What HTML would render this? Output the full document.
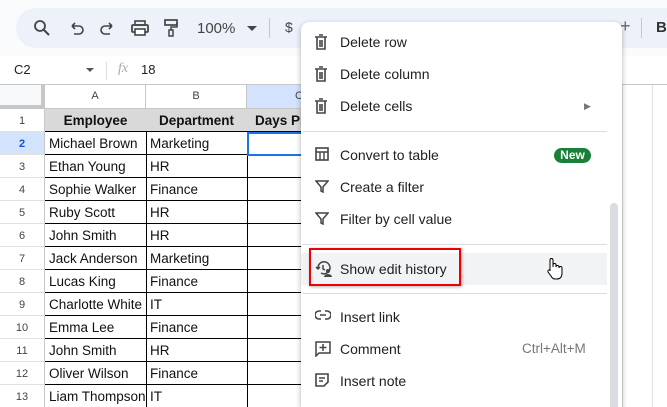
<!DOCTYPE html>
<html style="overflow:hidden;width:667px;height:407px"><head><style>
*{margin:0;padding:0;box-sizing:border-box}
body{width:667px;height:407px;overflow:hidden;background:#f9fbfd;font-family:"Liberation Sans",sans-serif;position:relative}
.a{position:absolute}
.tb{left:16px;top:8px;width:651px;height:40px;background:#edf2fa;border-radius:20px 0 0 20px}
.grid{left:0;top:56px;width:667px;height:351px;background:#fff}
.cell{position:absolute;border-right:1px solid #000;border-bottom:1px solid #000;font-size:13.5px;color:#111;padding-left:4px;line-height:24px;height:23px;white-space:nowrap;overflow:hidden}
.rh{position:absolute;left:0;width:45px;height:23px;border-right:1px solid #c7c7c7;border-bottom:1px solid #e1e1e1;font-size:11px;color:#444;text-align:center;line-height:24px;background:#fff}
.menu{left:301px;top:22px;width:321px;height:385px;background:#fff;border-radius:8px 8px 0 0;box-shadow:0 2px 6px rgba(0,0,0,.3);overflow:hidden}
.mi{position:absolute;left:0;width:306px;height:32px;font-size:14px;color:#202124;line-height:32px}
.mi span.t{position:absolute;left:39px}
.mi svg{position:absolute;left:14px;top:8px}
.hr{position:absolute;left:2px;width:304px;height:1px;background:#dadce0}
</style></head><body>
<div class="a tb"></div>
<svg class="a" style="left:33px;top:19px" width="18" height="18" viewBox="0 0 18 18"><circle cx="7" cy="7" r="5" fill="none" stroke="#444" stroke-width="1.8"/><path d="M11 11l5 5" stroke="#444" stroke-width="2"/></svg>
<svg class="a" style="left:70px;top:21px" width="14" height="14" viewBox="0 0 14 14"><path d="M2 5h7a4 4 0 010 8H4M2 5l3-3M2 5l3 3" fill="none" stroke="#444" stroke-width="1.6"/></svg>
<svg class="a" style="left:100px;top:21px" width="14" height="14" viewBox="0 0 14 14"><path d="M12 5H5a4 4 0 000 8h5M12 5L9 2M12 5L9 8" fill="none" stroke="#444" stroke-width="1.6"/></svg>
<svg class="a" style="left:131px;top:20px" width="18" height="16" viewBox="0 0 18 16"><rect x="4" y="1" width="10" height="4" fill="none" stroke="#444" stroke-width="1.6"/><rect x="1" y="5" width="16" height="7" rx="1" fill="none" stroke="#444" stroke-width="1.8"/><rect x="4" y="9" width="10" height="6" fill="#fff" stroke="#444" stroke-width="1.6"/></svg>
<svg class="a" style="left:164px;top:19px" width="14" height="18" viewBox="0 0 14 18"><rect x="1" y="1" width="12" height="5" fill="none" stroke="#444" stroke-width="1.7"/><path d="M13 4v4H7v3" fill="none" stroke="#444" stroke-width="1.5"/><rect x="5" y="11" width="4" height="6" fill="none" stroke="#444" stroke-width="1.5"/></svg>
<div class="a" style="left:197px;top:20px;font-size:15px;color:#444">100%</div>
<div class="a" style="left:247px;top:26px;width:0;height:0;border-left:5px solid transparent;border-right:5px solid transparent;border-top:5px solid #444"></div>
<div class="a" style="left:269px;top:18px;width:1px;height:20px;background:#c7c7c7"></div>
<div class="a" style="left:285px;top:19px;font-size:14px;color:#444">$</div>
<div class="a" style="left:620px;top:16px;font-size:18px;color:#666">+</div>
<div class="a" style="left:641px;top:18px;width:1px;height:20px;background:#c7c7c7"></div>
<div class="a" style="left:656px;top:19px;font-size:15px;color:#333;font-weight:bold">B</div>
<div class="a grid"></div>
<div class="a" style="left:14px;top:62px;font-size:13px;color:#222">C2</div>
<div class="a" style="left:86px;top:68px;width:0;height:0;border-left:4px solid transparent;border-right:4px solid transparent;border-top:4px solid #555"></div>
<div class="a" style="left:106px;top:62px;width:1px;height:18px;background:#ddd"></div>
<div class="a" style="left:118px;top:61px;font-size:14px;color:#aaa;font-style:italic;font-family:'Liberation Serif',serif">fx</div>
<div class="a" style="left:141px;top:62px;font-size:13px;color:#222">18</div>
<div class="a" style="left:0;top:84px;width:667px;height:1px;background:#c7c7c7"></div>
<div class="a" style="left:0;top:85px;width:45px;height:24px;background:#f8f9fa;border-right:4px solid #c7c7c7;border-bottom:4px solid #c7c7c7"></div>
<div class="a" style="left:45px;top:85px;width:101px;height:24px;border-right:1px solid #c7c7c7;border-bottom:1px solid #c7c7c7;font-size:11px;color:#444;text-align:center;line-height:23px">A</div>
<div class="a" style="left:146px;top:85px;width:101px;height:24px;border-right:1px solid #c7c7c7;border-bottom:1px solid #c7c7c7;font-size:11px;color:#444;text-align:center;line-height:23px">B</div>
<div class="a" style="left:247px;top:85px;width:100px;height:24px;background:#d3e3fd;border-bottom:1px solid #c7c7c7;font-size:11px;color:#444;padding-left:48px;line-height:23px">C</div>
<div class="a" style="left:622px;top:85px;width:1px;height:322px;background:#e1e1e1"></div>
<div class="a" style="left:652px;top:85px;width:1px;height:322px;background:#e1e1e1"></div>
<div id="rows"></div>
<div class="a menu">
<div class="mi" style="top:4px"><svg width="12" height="16" viewBox="0 0 12 16"><path d="M0 3h12M4 1h4M2 3v12h8V3M5 6v7M7 6v7" fill="none" stroke="#444" stroke-width="1.6"/></svg><span class="t">Delete row</span></div>
<div class="mi" style="top:36px"><svg width="12" height="16" viewBox="0 0 12 16"><path d="M0 3h12M4 1h4M2 3v12h8V3M5 6v7M7 6v7" fill="none" stroke="#444" stroke-width="1.6"/></svg><span class="t">Delete column</span></div>
<div class="mi" style="top:68px"><svg width="12" height="16" viewBox="0 0 12 16"><path d="M0 3h12M4 1h4M2 3v12h8V3M5 6v7M7 6v7" fill="none" stroke="#444" stroke-width="1.6"/></svg><span class="t">Delete cells</span><span style="position:absolute;left:283px;font-size:9px;color:#777">&#9654;</span></div>
<div class="hr" style="top:109px"></div>
<div class="mi" style="top:117px"><svg width="14" height="14" viewBox="0 0 14 14"><rect x="1" y="1" width="12" height="12" fill="none" stroke="#444" stroke-width="1.6"/><path d="M1 5h12M5 5v8M9 5v8" stroke="#444" stroke-width="1.4"/></svg><span class="t">Convert to table</span><span style="position:absolute;left:253px;top:9px;width:37px;height:15px;border-radius:8px;background:#188038;color:#fff;font-size:12px;font-weight:bold;line-height:15px;text-align:center">New</span></div>
<div class="mi" style="top:149px"><svg width="14" height="14" viewBox="0 0 14 14"><path d="M1 2h12L8 8v5L6 12V8z" fill="none" stroke="#444" stroke-width="1.5"/></svg><span class="t">Create a filter</span></div>
<div class="mi" style="top:181px"><svg width="14" height="14" viewBox="0 0 14 14"><path d="M1 2h12L8 8v5L6 12V8z" fill="none" stroke="#444" stroke-width="1.5"/></svg><span class="t">Filter by cell value</span></div>
<div class="hr" style="top:222px"></div>
<div class="mi" style="top:231px;background:#f1f3f4"><svg width="18" height="16" viewBox="0 0 18 16"><path d="M3 7a6 6 0 1 1 3 5M1 6l2 2 2-2M8 4v4l2 1" fill="none" stroke="#444" stroke-width="1.5"/><circle cx="13" cy="10" r="2" fill="#444"/><path d="M9 16a4 3 0 018 0z" fill="#444"/></svg><span class="t">Show edit history</span></div>
<div class="a" style="left:8px;top:226px;width:152px;height:38px;border:2px solid #e00;box-shadow:1px 1px 3px rgba(0,0,0,.3)"></div>
<div class="hr" style="top:271px"></div>
<div class="mi" style="top:279px"><svg width="16" height="12" viewBox="0 0 16 12"><path d="M6 2H4a4 4 0 000 8h2M10 2h2a4 4 0 010 8h-2M5 6h6" fill="none" stroke="#444" stroke-width="1.6"/></svg><span class="t">Insert link</span></div>
<div class="mi" style="top:311px"><svg width="16" height="16" viewBox="0 0 16 16"><path d="M1 1h14v11H4l-3 3z" fill="none" stroke="#444" stroke-width="1.5"/><path d="M8 3v7M4.5 6.5h7" stroke="#444" stroke-width="1.5"/></svg><span class="t">Comment</span><span style="position:absolute;left:221px;color:#777;font-size:13.5px">Ctrl+Alt+M</span></div>
<div class="mi" style="top:343px"><svg width="14" height="14" viewBox="0 0 14 14"><path d="M1 1h12v8l-4 4H1z" fill="none" stroke="#444" stroke-width="1.6"/><path d="M4 5h6M4 8h4" stroke="#444" stroke-width="1.4"/></svg><span class="t">Insert note</span></div>
<div class="a" style="left:309px;top:181px;width:8px;height:220px;background:#dadce0;border-radius:4px"></div>
</div>
<svg class="a" style="left:545px;top:257px" width="18" height="24" viewBox="0 0 18 24"><path d="M5 14V3a1.5 1.5 0 013 0v7V8a1.5 1.5 0 013 0v2a1.5 1.5 0 013 0v1a1.5 1.5 0 013 0v5c0 4-2 6-5 6H10c-2 0-3-1-4-3l-3-4a1.5 1.5 0 012-2z" fill="#fff" stroke="#000" stroke-width="1"/></svg>
<script>
var d=[["Employee","Department"],["Michael Brown","Marketing"],["Ethan Young","HR"],["Sophie Walker","Finance"],["Ruby Scott","HR"],["John Smith","HR"],["Jack Anderson","Marketing"],["Lucas King","Finance"],["Charlotte White","IT"],["Emma Lee","Finance"],["John Smith","HR"],["Oliver Wilson","Finance"],["Liam Thompson","IT"]];
var h="";
for(var i=0;i<13;i++){var t=i==0?109:132+23*(i-1);var hd=i==0;
h+='<div class="rh" style="top:'+t+'px;'+(i==1?'background:#d3e3fd;font-weight:bold;color:#0b57d0':'')+'">'+(i+1)+'</div>';
var st=hd?'background:#d9d9d9;font-weight:bold;text-align:center;padding-left:0;':'';
h+='<div class="cell" style="left:45px;top:'+t+'px;width:102px;'+st+'">'+d[i][0]+'</div>';
h+='<div class="cell" style="left:146px;top:'+t+'px;width:102px;'+st+'">'+d[i][1]+'</div>';
h+='<div class="cell" style="left:247px;top:'+t+'px;width:80px;'+(hd?'background:#d9d9d9;font-weight:bold;padding-left:8px;':'')+'">'+(hd?'Days Present':'')+'</div>';}
h+='<div class="a" style="left:247px;top:132px;width:56px;height:24px;border:2px solid #1a73e8"></div>';
document.getElementById("rows").innerHTML=h;
</script>
</body></html>
